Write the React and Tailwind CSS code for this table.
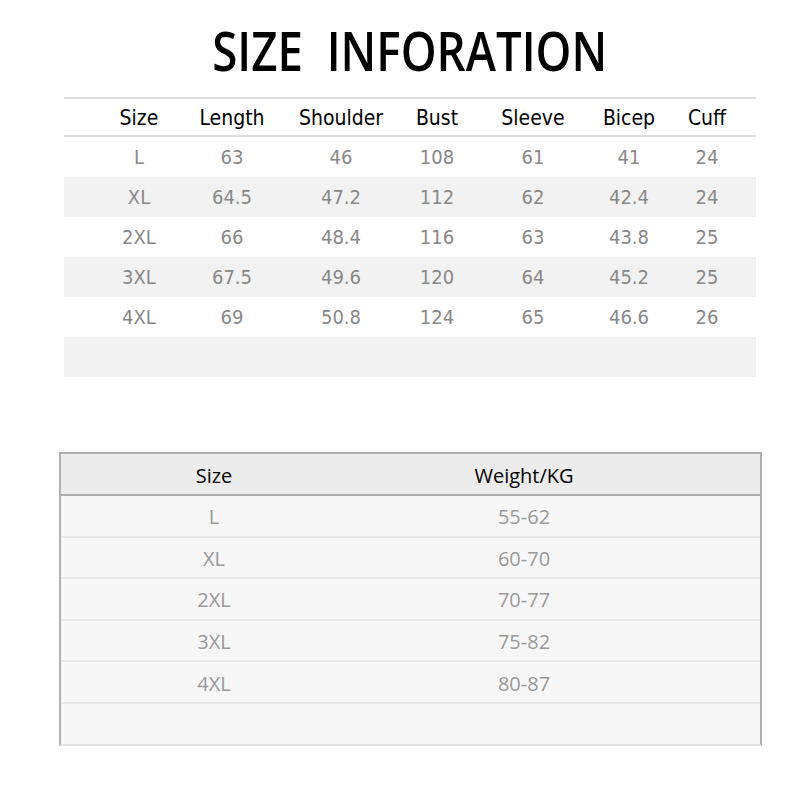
import React from "react";

const top = [
  ["L", "63", "46", "108", "61", "41", "24"],
  ["XL", "64.5", "47.2", "112", "62", "42.4", "24"],
  ["2XL", "66", "48.4", "116", "63", "43.8", "25"],
  ["3XL", "67.5", "49.6", "120", "64", "45.2", "25"],
  ["4XL", "69", "50.8", "124", "65", "46.6", "26"],
];
const heads = ["Size", "Length", "Shoulder", "Bust", "Sleeve", "Bicep", "Cuff"];
const weights = [
  ["L", "55-62"],
  ["XL", "60-70"],
  ["2XL", "70-77"],
  ["3XL", "75-82"],
  ["4XL", "80-87"],
];

const narrow = { fontFamily: '"DejaVu Sans Condensed", "Open Sans", sans-serif' };

export default function App() {
  return (
    <div className="w-[800px] h-[800px] bg-white overflow-hidden">
      <div className="h-[97px] flex items-center justify-center pl-[20px] pt-[2px]">
        <h1
          className="inline-block text-[54px] leading-none font-semibold text-black whitespace-pre scale-x-[0.845]"
          style={{ fontFamily: '"Open Sans", sans-serif' }}
        >
          SIZE  INFORATION
        </h1>
      </div>
      <div className="ml-[64px] w-[692px]" style={narrow}>
        <div className="h-[40px] border-y-2 border-[#dddddd] grid grid-cols-[92px_94px_124px_68px_124px_68px_88px] pl-[29px] items-center pt-[3px] text-[21px] text-black">
          {heads.map((h) => (
            <div key={h} className="text-center">{h}</div>
          ))}
        </div>
        {top.map((r, i) => (
          <div
            key={i}
            className={`h-[40px] grid grid-cols-[92px_94px_124px_68px_124px_68px_88px] pl-[29px] items-center pt-[0px] text-[20px] text-[#888888] ${i % 2 === 1 ? "bg-[#f2f2f2]" : "bg-white"}`}
          >
            {r.map((c, j) => (
              <div key={j} className="text-center">{c}</div>
            ))}
          </div>
        ))}
        <div className="h-[40px] bg-[#f2f2f2]"></div>
      </div>

      <div className="mt-[75px] ml-[59px] w-[703px] border-2 border-[#b0b0b0] border-b-[#e0e0e0] bg-[#f7f7f7]" style={{ fontFamily: '"Open Sans", sans-serif' }}>
        <div className="h-[42px] bg-[#ececec] border-b-2 border-[#ababab] grid grid-cols-[306px_314px] items-center pt-[3px] text-[20px] text-black">
          <div className="text-center">Size</div>
          <div className="text-center">Weight/KG</div>
        </div>
        {weights.map((r, i) => (
          <div key={i} className="h-[41.6px] border-b-2 border-[#e6e6e6] grid grid-cols-[306px_314px] items-center pt-[3px] text-[20px] text-[#999999]">
            <div className="text-center">{r[0]}</div>
            <div className="text-center">{r[1]}</div>
          </div>
        ))}
        <div className="h-[40px]"></div>
      </div>
    </div>
  );
}
